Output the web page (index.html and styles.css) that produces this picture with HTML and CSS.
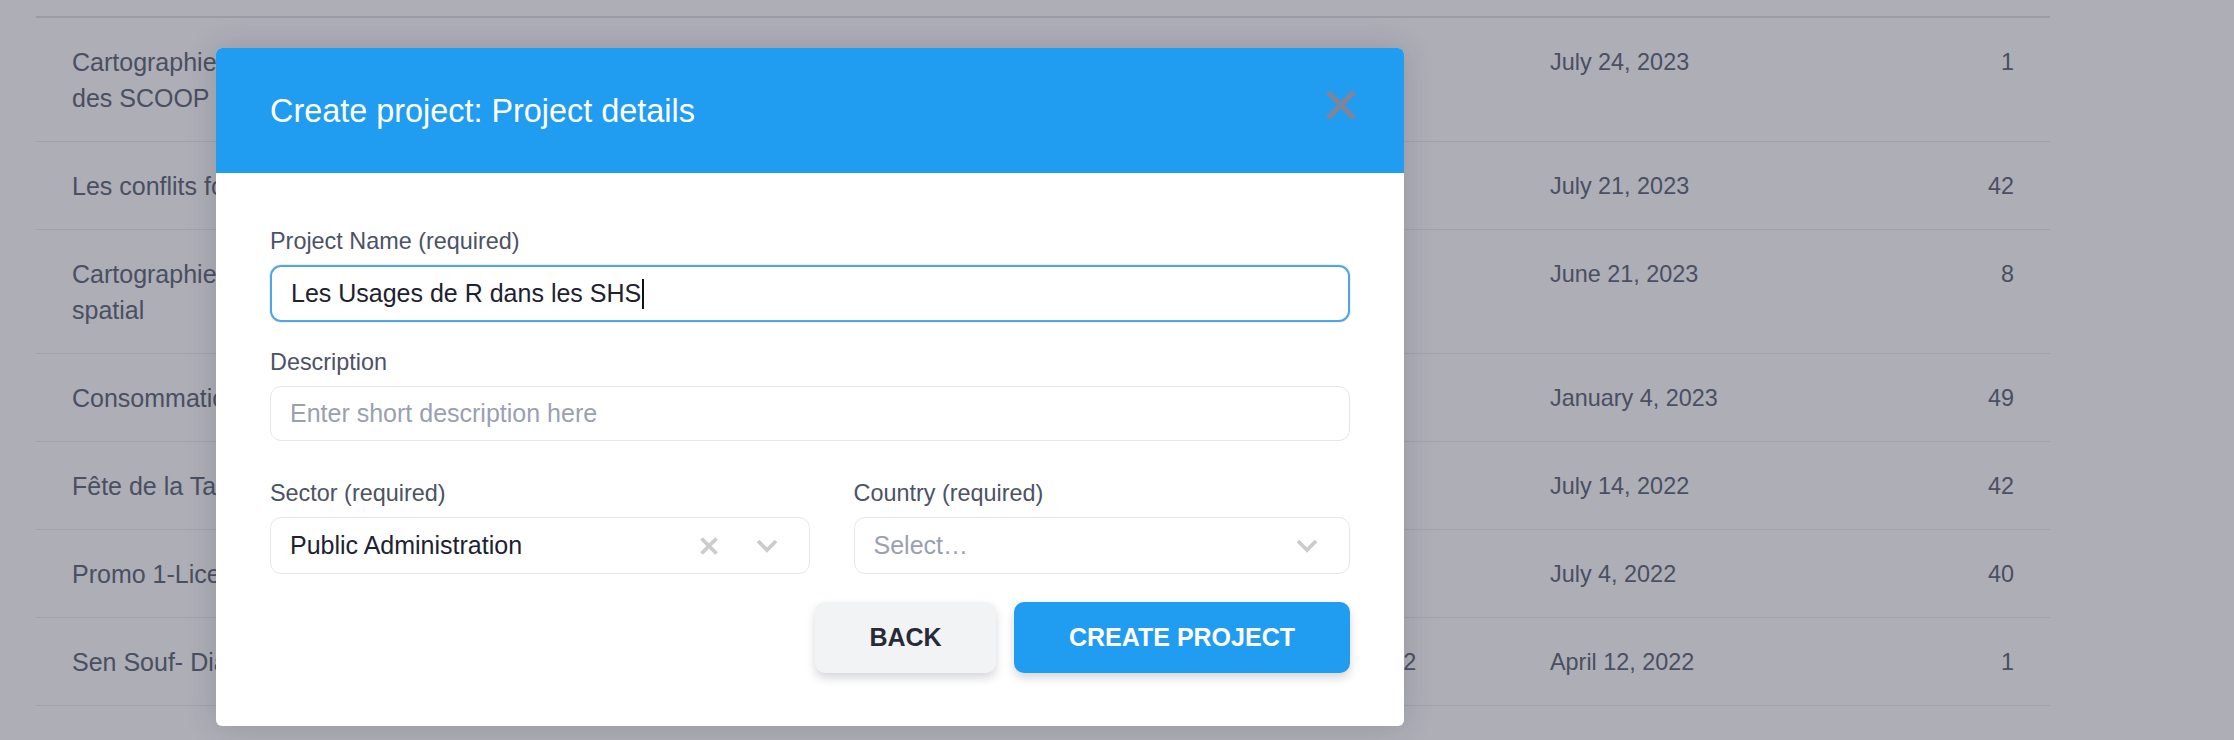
FILE: index.html
```html
<!DOCTYPE html>
<html lang="fr">
<head>
<meta charset="utf-8">
<title>Projects</title>
<link rel="stylesheet" href="styles.css">
</head>
<body>
<div class="page">
  <div class="table">
    <div class="row">
      <div class="cell title">Cartographie des acteurs de l'économie sociale et solidaire<br>des SCOOP de la région</div>
      <div class="cell extra">Équipe Dakar</div>
      <div class="cell date">July 24, 2023</div>
      <div class="cell num">1</div>
    </div>
    <div class="row">
      <div class="cell title">Les conflits fonciers au Sénégal</div>
      <div class="cell extra">Équipe Thiès</div>
      <div class="cell date">July 21, 2023</div>
      <div class="cell num">42</div>
    </div>
    <div class="row">
      <div class="cell title">Cartographie des inégalités et de l'aménagement du territoire<br>spatial</div>
      <div class="cell extra">Équipe Dakar</div>
      <div class="cell date">June 21, 2023</div>
      <div class="cell num">8</div>
    </div>
    <div class="row">
      <div class="cell title">Consommation des ménages</div>
      <div class="cell extra">Équipe Kaolack</div>
      <div class="cell date">January 4, 2023</div>
      <div class="cell num">49</div>
    </div>
    <div class="row">
      <div class="cell title">Fête de la Tabaski</div>
      <div class="cell extra">Équipe Dakar</div>
      <div class="cell date">July 14, 2022</div>
      <div class="cell num">42</div>
    </div>
    <div class="row">
      <div class="cell title">Promo 1-Licence Sociologie</div>
      <div class="cell extra">Équipe Saint-Louis</div>
      <div class="cell date">July 4, 2022</div>
      <div class="cell num">40</div>
    </div>
    <div class="row">
      <div class="cell title">Sen Souf- Diagnostic agricole</div>
      <div class="cell extra">Enquête terrain 2021-2022</div>
      <div class="cell date">April 12, 2022</div>
      <div class="cell num">1</div>
    </div>
    <div class="row">
      <div class="cell title">Chantier de la mobilité urbaine à Dakar</div>
      <div class="cell extra">en cours</div>
      <div class="cell date">March 3, 2022</div>
      <div class="cell num">12</div>
    </div>
  </div>

  <div class="modal" role="dialog" aria-labelledby="modal-title">
    <div class="modal-header">
      <h2 id="modal-title" class="modal-title">Create project: Project details</h2>
      <button class="close" aria-label="Close">
        <svg width="30" height="30" viewBox="0 0 30 30"><path d="M2 2 L28 28 M28 2 L2 28" stroke="#7b859b" stroke-width="5.5" stroke-linecap="butt" fill="none"/></svg>
      </button>
    </div>
    <div class="modal-body">
      <div class="field field-name">
        <label class="label">Project Name (required)</label>
        <div class="input input-focus"><span class="value">Les Usages de R dans les SHS</span><span class="caret"></span></div>
      </div>
      <div class="field field-desc">
        <label class="label">Description</label>
        <div class="input input-desc"><span class="placeholder">Enter short description here</span></div>
      </div>
      <div class="selects">
        <div class="field">
          <label class="label">Sector (required)</label>
          <div class="input select">
            <span class="value grow">Public Administration</span>
            <svg class="clear" width="18" height="18" viewBox="0 0 18 18"><path d="M1.5 1.5 L16.5 16.5 M16.5 1.5 L1.5 16.5" stroke="#cccccc" stroke-width="3.8" fill="none"/></svg>
            <svg class="chev" width="22" height="14" viewBox="0 0 22 14"><path d="M2 2 L11 11 L20 2" stroke="#cccccc" stroke-width="3.8" fill="none"/></svg>
          </div>
        </div>
        <div class="field">
          <label class="label">Country (required)</label>
          <div class="input select">
            <span class="placeholder grow">Select…</span>
            <svg class="chev" width="22" height="14" viewBox="0 0 22 14"><path d="M2 2 L11 11 L20 2" stroke="#cccccc" stroke-width="3.8" fill="none"/></svg>
          </div>
        </div>
      </div>
      <div class="actions">
        <button class="btn btn-back">BACK</button>
        <button class="btn btn-create">CREATE PROJECT</button>
      </div>
    </div>
  </div>
</div>
</body>
</html>
```

FILE: styles.css
```css
* { box-sizing: border-box; }

html, body {
  margin: 0;
  height: 740px;
  overflow: hidden;
}

body {
  background: #adaeb6;
  font-family: "Liberation Sans", Arial, Helvetica, sans-serif;
  color: #4a4f61;
}

.page {
  position: relative;
  height: 740px;
  padding: 16px 0 0 36px;
}

.table {
  width: 2014px;
  border-top: 2px solid #9a9ba3;
}

.row {
  display: grid;
  grid-template-columns: 1066px 412px 336px 1fr;
  border-bottom: 1px solid #a0a1aa;
}

.cell {
  padding: 26px 36px 25px;
  font-size: 23.4px;
  line-height: 36px;
  white-space: nowrap;
  overflow: hidden;
}

.title { font-size: 25px; }

.num { text-align: right; }

/* Modal */
.modal {
  position: absolute;
  left: 216px;
  top: 48px;
  width: 1188px;
  background: #ffffff;
  border-radius: 6px;
  overflow: hidden;
  box-shadow: 0 0 30px rgba(40, 42, 55, 0.18);
}

.modal-header {
  height: 125px;
  background: #209cf1;
  display: flex;
  align-items: center;
  justify-content: space-between;
  padding: 0 48px 0 54px;
}

.modal-title {
  margin: 0;
  font-size: 32.4px;
  font-weight: 400;
  color: #ffffff;
  line-height: 40px;
}

.close {
  background: none;
  border: 0;
  padding: 0;
  width: 30px;
  height: 30px;
  margin-bottom: 12px;
  display: block;
}

.close svg { display: block; }

.modal-body {
  padding: 52px 54px 53px;
}

.field {
  display: flex;
  flex-direction: column;
}

.field-name { margin-bottom: 24px; }
.field-desc { margin-bottom: 36px; }

.label {
  font-size: 23.4px;
  line-height: 33px;
  color: #4c5265;
  margin-bottom: 7px;
}

.input {
  height: 57px;
  border: 1.5px solid #e6e7ea;
  border-radius: 11px;
  display: flex;
  align-items: center;
  padding: 0 18px 0 19px;
  font-size: 25px;
  color: #1e2230;
}

.input-focus {
  border: 2px solid #52a4e3;
  box-shadow: 0 0 0 1px rgba(82, 164, 227, 0.15);
}

.input-desc { height: 55px; }

.caret {
  display: inline-block;
  width: 2px;
  height: 30px;
  background: #111111;
  margin-left: 1px;
}

.placeholder { color: #9aa0b2; }

.selects {
  display: grid;
  grid-template-columns: 539fr 496fr;
  gap: 44px;
  margin-bottom: 28px;
}

.select {
  padding-right: 31px;
}

.grow { flex: 1; }

.clear { margin-right: 38px; display: block; }
.chev { display: block; }

.actions {
  display: flex;
  justify-content: flex-end;
  gap: 18px;
}

.btn {
  height: 71px;
  border: 0;
  border-radius: 10px;
  font-family: "Liberation Sans", Arial, Helvetica, sans-serif;
  font-size: 25px;
  font-weight: 700;
  padding: 0 54px;
  box-shadow: 0 5px 10px rgba(30, 35, 50, 0.18);
}

.btn-back {
  width: 181px;
  background: #f2f3f5;
  color: #272b37;
}

.btn-create {
  width: 336px;
  background: #209cf1;
  color: #ffffff;
}
```
